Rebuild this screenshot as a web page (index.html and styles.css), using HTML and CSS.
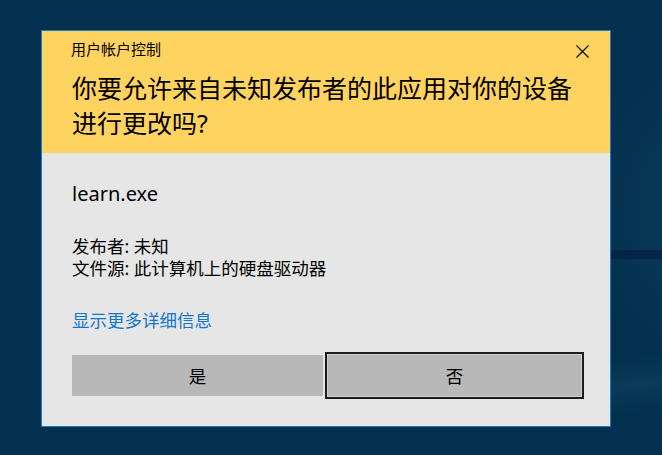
FILE: index.html
```html
<!DOCTYPE html>
<html lang="zh-CN">
<head>
<meta charset="utf-8">
<title>用户帐户控制</title>
<link rel="stylesheet" href="styles.css">
</head>
<body>
<div class="dialog">
  <div class="header">
    <div class="title-row">
      <div class="title">用户帐户控制</div>
      <svg class="close" width="13" height="13" viewBox="0 0 13 13" aria-hidden="true">
        <path d="M0.5 0.5 L12.5 12.5 M12.5 0.5 L0.5 12.5" stroke="#000" stroke-width="1.1" fill="none"/>
      </svg>
    </div>
    <div class="question">你要允许来自未知发布者的此应用对你的设备<br>进行更改吗?</div>
  </div>
  <div class="body">
    <div class="app">learn.exe</div>
    <div class="info">
      <div>发布者: 未知</div>
      <div>文件源: 此计算机上的硬盘驱动器</div>
    </div>
    <div class="link">显示更多详细信息</div>
    <div class="buttons">
      <div class="btn btn-yes">是</div>
      <div class="btn btn-no">否</div>
    </div>
  </div>
</div>
</body>
</html>
```
FILE: styles.css
```css
html, body {
  margin: 0;
  padding: 0;
}
body {
  width: 662px;
  height: 455px;
  overflow: hidden;
  font-family: "Noto Sans", "Noto Sans CJK SC", sans-serif;
  color: #000;
  background:
    linear-gradient(rgba(0,22,60,0.5), rgba(0,22,60,0.5)) 611px 250px / 51px 9px no-repeat,
    linear-gradient(172deg, transparent 0, transparent 78%, rgba(70,130,160,0.12) 84%, transparent 90%) 611px 0 / 51px 455px no-repeat,
    radial-gradient(ellipse 200px 240px at 720px 210px, rgba(30,80,110,0.35), transparent 70%),
    #03304f;
  padding-top: 30px;
  box-sizing: border-box;
}
.dialog {
  margin-left: 41px;
  width: 568px;
  border: 1px solid #1a7bd0;
  background: #e6e6e6;
}
.header {
  background: #ffd35f;
  padding: 8px 21px 12px 29px;
}
.title-row {
  display: flex;
  justify-content: space-between;
  align-items: flex-start;
}
.title {
  font-size: 15px;
  line-height: 20px;
}
.close {
  display: block;
  margin-top: 6px;
}
.question {
  margin-top: 12px;
  font-size: 25px;
  line-height: 35px;
  padding-left: 1px;
}
.body {
  padding: 27px 26px 27px 30px;
}
.app {
  font-size: 20px;
  line-height: 28px;
}
.info {
  margin-top: 27px;
  font-size: 17.5px;
  line-height: 22px;
}
.link {
  margin-top: 30px;
  font-size: 17.5px;
  line-height: 22px;
  color: #1077cc;
}
.buttons {
  margin-top: 21px;
  display: flex;
  align-items: center;
  gap: 2px;
}
.btn {
  box-sizing: border-box;
  background: #b8b8b8;
  font-size: 17.5px;
  display: flex;
  align-items: center;
  justify-content: center;
}
.btn-yes {
  width: 251px;
  height: 41px;
}
.btn-no {
  width: 259px;
  height: 47px;
  border: 2px solid #1c1c1c;
  box-shadow: inset 0 0 0 1px #cfcfcf;
}
```
